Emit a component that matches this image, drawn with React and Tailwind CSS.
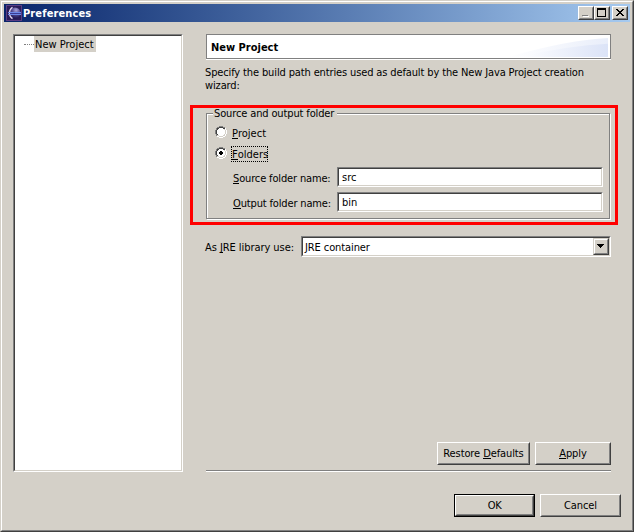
import React from "react";

const sunken =
  "bg-white border border-t-[#808080] border-l-[#808080] border-r-white border-b-white";
const sunkenInner =
  "h-full w-full border border-t-[#404040] border-l-[#404040] border-r-[#d4d0c8] border-b-[#d4d0c8]";

function Mn({ children }) {
  return <span className="border-b border-black inline-block h-[12px] leading-[13px]">{children}</span>;
}

function Field({ label, value }) {
  return (
    <div className="flex h-5 items-start">
      <div className="w-[104px] shrink-0 pt-[5px] tracking-[-0.15px]">{label}</div>
      <div className={"h-5 w-[266px] " + sunken}>
        <div className={sunkenInner + " pl-[3px] pt-[2px]"}>{value}</div>
      </div>
    </div>
  );
}

function Radio({ checked }) {
  return (
    <svg width="12" height="12" viewBox="0 0 12 12" shapeRendering="crispEdges" className="shrink-0">
      <path fill="#fff" d="M4 2h4v1h1v1h1v4h-1v1h-1v1h-4v-1h-1v-1h-1v-4h1v-1h1z" />
      <path fill="#808080" d="M4 0h4v1h-4zM2 1h2v1h-2zM8 1h2v1h-2zM1 2h1v2h-1zM0 4h1v4h-1zM1 8h1v2h-1z" />
      <path fill="#404040" d="M4 1h4v1h-4zM2 2h2v1h-2zM8 2h2v1h-2zM2 3h1v1h-1zM1 4h1v4h-1zM2 8h1v1h-1z" />
      <path fill="#d4d0c8" d="M9 3h1v1h-1zM10 4h1v4h-1zM9 8h1v1h-1zM8 9h2v1h-2zM2 9h2v1h-2zM4 10h4v1h-4z" />
      <path fill="#fff" d="M10 2h1v2h-1zM11 4h1v4h-1zM10 8h1v2h-1zM8 10h2v1h-2zM2 10h2v1h-2zM4 11h4v1h-4z" />
      {checked && <path fill="#000" d="M5 4h2v1h1v2h-1v1h-2v-1h-1v-2h1z" />}
    </svg>
  );
}

function CaptionButton({ children, className = "" }) {
  return (
    <div className={"h-[14px] w-4 border border-t-white border-l-white border-r-[#404040] border-b-[#404040] bg-[#d4d0c8] " + className}>
      <div className="h-full w-full border border-t-[#d4d0c8] border-l-[#d4d0c8] border-r-[#808080] border-b-[#808080]">
        <svg width="12" height="10" viewBox="0 0 12 10" shapeRendering="crispEdges" className="block">{children}</svg>
      </div>
    </div>
  );
}

function Button({ children, className }) {
  return (
    <div className={"h-[23px] border border-t-white border-l-white border-r-[#404040] border-b-[#404040] " + className}>
      <div className="flex h-full w-full justify-center border border-t-[#d4d0c8] border-l-[#d4d0c8] border-r-[#808080] border-b-[#808080] pt-[3px]">
        <div>{children}</div>
      </div>
    </div>
  );
}

function AppIcon() {
  return (
    <svg width="16" height="16" viewBox="0 0 16 16" className="block">
      <defs>
        <radialGradient id="orb" cx="0.6" cy="0.25" r="0.75">
          <stop offset="0" stopColor="#a9a4d8" />
          <stop offset="0.45" stopColor="#5a5098" />
          <stop offset="1" stopColor="#1c1450" />
        </radialGradient>
      </defs>
      <rect width="16" height="16" fill="#5a3c84" />
      <rect x="1" y="1" width="14" height="14" fill="#2a1c58" />
      <circle cx="9" cy="8" r="5.6" fill="url(#orb)" />
      <path d="M6.5 2.3Q3.4 4.5 3.4 8T6.5 13.6" fill="none" stroke="#e4d8f0" strokeWidth="1.3" />
      <path d="M2 7.5h13M2 9.5h13" stroke="#6c88e8" />
      <path d="M4 8.5h11" stroke="#3c3c94" />
    </svg>
  );
}

export default function App() {
  return (
    <div className="h-[532px] w-[634px] overflow-hidden whitespace-nowrap border border-t-[#d4d0c8] border-l-[#d4d0c8] border-r-[#404040] border-b-[#404040] bg-[#d4d0c8] font-['DejaVu_Sans_Condensed','DejaVu_Sans',sans-serif] text-[11px] leading-[13px] text-black">
      <div className="h-full w-full border border-t-white border-l-white border-r-[#808080] border-b-[#808080] p-[2px]">
        <div className="flex h-[18px] items-center bg-linear-to-r from-[#0a246a] to-[#a6caf0] pr-[2px] pl-[2px]">
          <AppIcon />
          <div className="ml-[1px] flex-1 font-bold tracking-[0.12px] text-white">Preferences</div>
          <CaptionButton>
            <path fill="#fff" d="M3 8h6v1h-6z" />
            <path fill="#808080" d="M2 7h6v1h-6z" />
          </CaptionButton>
          <CaptionButton>
            <path fill="#000" fillRule="evenodd" d="M1 0h9v9h-9zM2 2v6h7v-6z" />
          </CaptionButton>
          <CaptionButton className="ml-[2px]">
            <path fill="#000" d="M2 1h2v1h1v1h2v-1h1v-1h2v1h-1v1h-1v1h-1v1h1v1h1v1h1v1h-2v-1h-1v-1h-2v1h-1v1h-2v-1h1v-1h1v-1h1v-1h-1v-1h-1v-1h-1z" />
          </CaptionButton>
        </div>

        <div className="flex pt-3 pl-[9px]">
          <div className={"h-[438px] w-[170px] shrink-0 " + sunken}>
            <div className={sunkenInner + " flex items-start pl-[9px]"}>
              <div className="mt-[8px] w-[10px] border-t border-dotted border-[#808080]" />
              <div className="h-4 w-[62px] bg-[#d4d0c8] pt-[2px] pl-[1px]">New Project</div>
            </div>
          </div>

          <div className="ml-[23px] w-[405px]">
            <div className="border-b border-white">
              <div className="flex h-[25px] justify-between border border-[#808080] bg-white p-px">
                <div className="pt-[5px] pl-[3px] font-bold">New Project</div>
                <svg width="100" height="19" viewBox="0 0 100 20" preserveAspectRatio="none" className="mt-[2px] mr-px block">
                  <defs>
                    <linearGradient id="swoosh">
                      <stop offset="0" stopColor="#fff" />
                      <stop offset="1" stopColor="#dbe3f7" />
                    </linearGradient>
                    <linearGradient id="haze">
                      <stop offset="0" stopColor="#fff" />
                      <stop offset="1" stopColor="#e9eefa" />
                    </linearGradient>
                  </defs>
                  <path fill="url(#haze)" d="M0 20Q60 2 100 0V20z" />
                  <path fill="url(#swoosh)" d="M10 20Q60 8 100 6V20z" />
                </svg>
              </div>
            </div>

            <div className="mt-[6px] -ml-px h-[26px] tracking-[-0.13px]">
              <div>Specify the build path entries used as default by the New Java Project creation</div>
              <div>wizard:</div>
            </div>

            <div className="-mr-[7px] -ml-4 mt-[13px] h-[120px] border-[3px] border-[#ff0000] pl-[13px]">
              <div className="mt-[5px] h-[106px] w-[404px] border border-[#808080] shadow-[1px_1px_0_#fff,inset_1px_1px_0_#fff]">
                <div className="-mt-[6px] ml-[6px] h-[11px] w-[124px] bg-[#d4d0c8] pl-[1px] leading-[11px] tracking-[-0.13px]">Source and output folder</div>
                <div className="mt-[7px] ml-2 flex h-[13px]">
                  <Radio />
                  <div className="ml-[5px] pt-[1px]"><Mn>P</Mn>roject</div>
                </div>
                <div className="mt-[7px] ml-2 flex h-4">
                  <div className="pt-[1px]"><Radio checked /></div>
                  <div className="ml-1 h-4 w-[37px] border border-dotted border-black pt-[1px]"><Mn>F</Mn>olders</div>
                </div>
                <div className="mt-[5px] ml-[26px] flex flex-col gap-[5px]">
                  <Field label={<><Mn>S</Mn>ource folder name:</>} value="src" />
                  <Field label={<><Mn>O</Mn>utput folder name:</>} value="bin" />
                </div>
              </div>
            </div>

            <div className="mt-[11px] flex h-[21px]">
              <div className="-ml-px w-[96px] shrink-0 pt-[5px] tracking-[-0.06px]">As <Mn>J</Mn>RE library use:</div>
              <div className={"h-[21px] w-[310px] " + sunken}>
                <div className={sunkenInner + " flex justify-between"}>
                  <div className="pt-[3px] pl-[2px] tracking-[-0.1px]">JRE container</div>
                  <div className="h-[17px] w-4 border border-t-[#d4d0c8] border-l-[#d4d0c8] border-r-[#404040] border-b-[#404040] bg-[#d4d0c8]">
                    <div className="h-full w-full border border-t-white border-l-white border-r-[#808080] border-b-[#808080] pt-[4px] pl-[2px]">
                      <svg width="7" height="4" viewBox="0 0 7 4" shapeRendering="crispEdges" className="block">
                        <path d="M0 0h7v1h-1v1h-1v1h-1v1h-1v-1h-1v-1h-1v-1h-1z" />
                      </svg>
                    </div>
                  </div>
                </div>
              </div>
            </div>

            <div className="mt-[185px] flex justify-end gap-[5px]">
              <Button className="w-[93px] tracking-[-0.1px]">Restore <Mn>D</Mn>efaults</Button>
              <Button className="w-[76px] tracking-[-0.1px]"><Mn>A</Mn>pply</Button>
            </div>
            <div className="mt-[5px] h-[2px] border-t border-b border-t-[#808080] border-b-white" />
          </div>
        </div>

        <div className="mt-[22px] flex justify-end gap-[5px] pr-[9px]">
          <div className="h-[23px] w-[81px] border border-black">
            <div className="h-full w-full border border-t-white border-l-white border-r-[#404040] border-b-[#404040]">
              <div className="flex h-full w-full justify-center border border-t-[#d4d0c8] border-l-[#d4d0c8] border-r-[#808080] border-b-[#808080] pt-[2px] tracking-[-0.3px]">OK</div>
            </div>
          </div>
          <Button className="w-[81px] tracking-[-0.1px]">Cancel</Button>
        </div>
      </div>
    </div>
  );
}
